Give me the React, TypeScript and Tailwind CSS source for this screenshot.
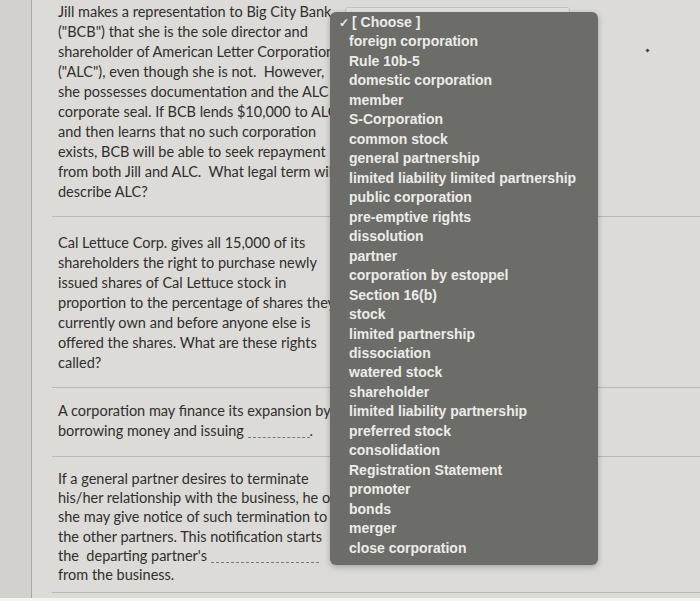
const options = [
  "foreign corporation",
  "Rule 10b-5",
  "domestic corporation",
  "member",
  "S-Corporation",
  "common stock",
  "general partnership",
  "limited liability limited partnership",
  "public corporation",
  "pre-emptive rights",
  "dissolution",
  "partner",
  "corporation by estoppel",
  "Section 16(b)",
  "stock",
  "limited partnership",
  "dissociation",
  "watered stock",
  "shareholder",
  "limited liability partnership",
  "preferred stock",
  "consolidation",
  "Registration Statement",
  "promoter",
  "bonds",
  "merger",
  "close corporation",
];

function Blank({ w }: { w: string }) {
  return <span className={`inline-block h-[12px] ${w} translate-y-[2px] border-b border-dashed border-[#7a7a76] align-baseline`} />;
}

function Question({ children, className }: { children: React.ReactNode; className: string }) {
  return (
    <div className={`flex border-b border-[#b9b8b3] ${className}`}>
      <div className="w-[286px] shrink-0 pl-[6px] text-[14.5px] text-[#2f2f2d]">{children}</div>
    </div>
  );
}

export default function App() {
  return (
    <div className="relative h-[601px] w-[700px] overflow-hidden bg-[#d6d5d1] font-['Lato',sans-serif]">
      <div className="flex h-[598px]">
        <div className="w-[32px] shrink-0 border-r border-[#a9a8a3] bg-[#d2d1cd]" />
        <div className="flex-1 bg-[#dcdbd7] pl-[20px]">
          <Question className="pt-[2px] pb-[14px] leading-[20px]">
            Jill makes a representation to Big City Bank ("BCB") that she is the sole director and shareholder of American Letter Corporation ("ALC"), even though she is not.&nbsp; However, she possesses documentation and the ALC corporate seal. If BCB lends $10,000 to ALC and then learns that no such corporation exists, BCB will be able to seek repayment from both Jill and ALC.&nbsp; What legal term will describe ALC?
          </Question>
          <Question className="pt-[16px] pb-[14px] leading-[20px]">
            Cal Lettuce Corp. gives all 15,000 of its shareholders the right to purchase newly issued shares of Cal Lettuce stock in proportion to the percentage of shares they currently own and before anyone else is offered the shares. What are these rights called?
          </Question>
          <Question className="pt-[13px] pb-[16px] leading-[19.5px]">
            A corporation may finance its expansion by borrowing money and issuing <Blank w="w-[62px]" />.
          </Question>
          <Question className="pt-[12px] pb-[8px] leading-[19.2px]">
            If a general partner desires to terminate his/her relationship with the business, he or she may give notice of such termination to the other partners. This notification starts the&nbsp; departing partner's <Blank w="w-[108px]" /> from the business.
          </Question>
        </div>
      </div>
      <div className="h-[3px] bg-[#f4f4f2]" />

      {/* select box sitting under the open menu */}
      <div className="absolute left-[345px] top-[7px] h-[30px] w-[225px] rounded-[3px] border border-[#c4c3be] bg-[#e4e3df]" />

      {/* open native menu */}
      <div className="absolute left-[330px] top-[12px] w-[268px] rounded-[6px] bg-[#6c6c68] pt-[1px] pb-[7px] shadow-[0_2px_6px_rgba(0,0,0,0.25)] font-['Liberation_Sans',sans-serif] text-[14px] font-bold text-[#ecece8]">
        <div className="flex h-[545px] flex-col justify-between">
          <div className="h-[19px] whitespace-nowrap pl-[9px] leading-[19px]">
            <span className="inline-block w-[13px] text-[12px] leading-none">✓</span>
            [ Choose ]
          </div>
          {options.map((o) => (
            <div key={o} className="h-[19px] whitespace-nowrap pl-[19px] leading-[19px]">
              {o}
            </div>
          ))}
        </div>
      </div>

      <div className="absolute left-[646px] top-[49px] h-[3px] w-[3px] rotate-45 bg-[#4a4a48]" />
    </div>
  );
}
